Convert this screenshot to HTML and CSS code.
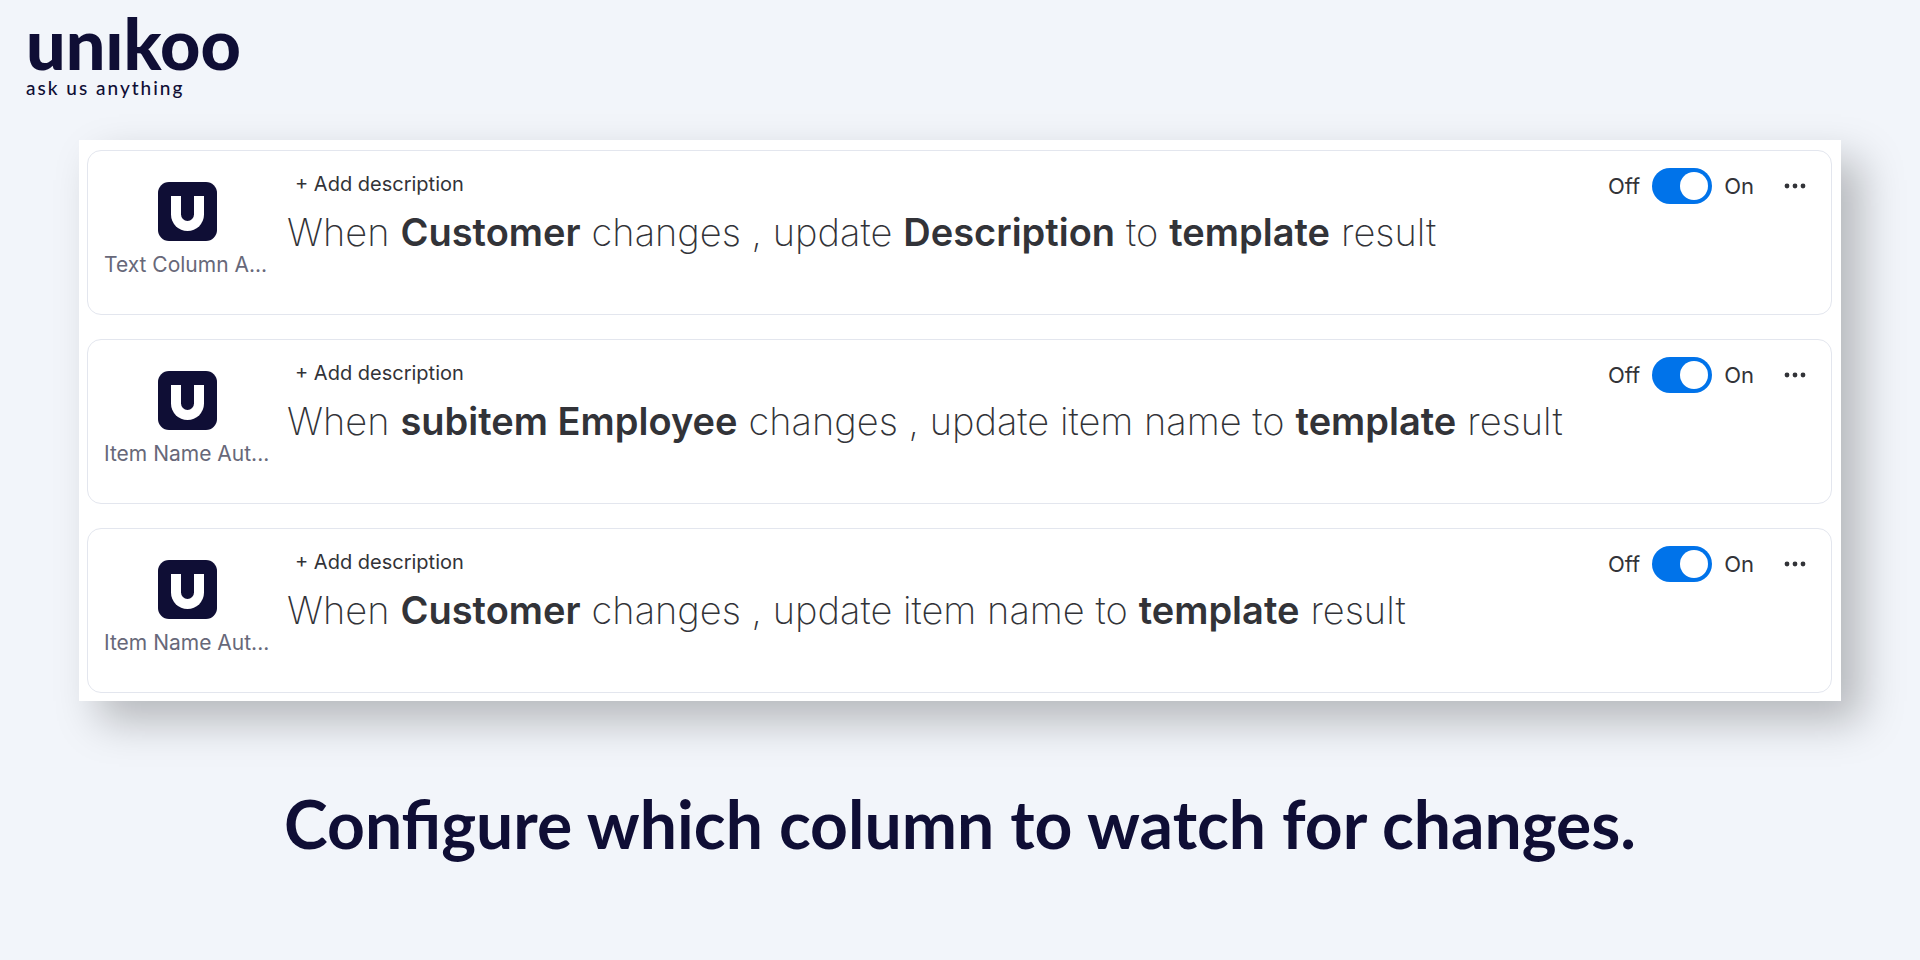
FILE: index.html
```
<!DOCTYPE html>
<html lang="en">
<head>
  <meta charset="UTF-8" />
  <meta name="viewport" content="width=device-width, initial-scale=1.0"/>
  <title>unikoo</title>
  <link rel="stylesheet" href="styles.css">
</head>
<body>
  <header class="brand">
    <div class="brand-name">unıkoo</div>
    <div class="brand-tagline">ask us anything</div>
  </header>

  <main>
    <section class="panel">
      <article class="card">
        <div class="app">
          <div class="app-icon"><span class="app-mark"></span></div>
          <div class="app-name">Text Column A...</div>
        </div>
        <div class="recipe">
          <button class="add-description" type="button">+ Add description</button>
          <p class="sentence">
            <span>When</span> <strong>Customer</strong> <span>changes , update</span> <strong>Description</strong> <span>to</span> <strong>template</strong> <span>result</span>
          </p>
        </div>
        <div class="controls">
          <label class="switch">Off <input type="checkbox" class="toggle" checked> On</label>
          <button class="menu" type="button" aria-label="Menu">
            <svg width="22" height="6" viewBox="0 0 22 6"><circle cx="3" cy="3" r="2.4"/><circle cx="11" cy="3" r="2.4"/><circle cx="19" cy="3" r="2.4"/></svg>
          </button>
        </div>
      </article>

      <article class="card">
        <div class="app">
          <div class="app-icon"><span class="app-mark"></span></div>
          <div class="app-name">Item Name Aut...</div>
        </div>
        <div class="recipe">
          <button class="add-description" type="button">+ Add description</button>
          <p class="sentence">
            <span>When</span> <strong>subitem Employee</strong> <span>changes , update item name to</span> <strong>template</strong> <span>result</span>
          </p>
        </div>
        <div class="controls">
          <label class="switch">Off <input type="checkbox" class="toggle" checked> On</label>
          <button class="menu" type="button" aria-label="Menu">
            <svg width="22" height="6" viewBox="0 0 22 6"><circle cx="3" cy="3" r="2.4"/><circle cx="11" cy="3" r="2.4"/><circle cx="19" cy="3" r="2.4"/></svg>
          </button>
        </div>
      </article>

      <article class="card">
        <div class="app">
          <div class="app-icon"><span class="app-mark"></span></div>
          <div class="app-name">Item Name Aut...</div>
        </div>
        <div class="recipe">
          <button class="add-description" type="button">+ Add description</button>
          <p class="sentence">
            <span>When</span> <strong>Customer</strong> <span>changes , update item name to</span> <strong>template</strong> <span>result</span>
          </p>
        </div>
        <div class="controls">
          <label class="switch">Off <input type="checkbox" class="toggle" checked> On</label>
          <button class="menu" type="button" aria-label="Menu">
            <svg width="22" height="6" viewBox="0 0 22 6"><circle cx="3" cy="3" r="2.4"/><circle cx="11" cy="3" r="2.4"/><circle cx="19" cy="3" r="2.4"/></svg>
          </button>
        </div>
      </article>
    </section>

    <h1 class="headline">Configure which column to watch for changes.</h1>
  </main>
</body>
</html>
```
FILE: styles.css
```
* {
  box-sizing: border-box;
}
body {
  margin: 0;
  background-color: #f2f5fa;
  color: #323338;
  font-family: Inter, sans-serif;
}
.brand {
  height: 140px;
  padding: 10px 26px;
  color: #0f0e35;
  font-family: Lato, sans-serif;
}
.brand-name {
  font-size: 70px;
  line-height: 66px;
  font-weight: 900;
}
.brand-tagline {
  font-size: 19px;
  line-height: 24px;
  font-weight: 500;
  letter-spacing: 2px;
}
.panel {
  display: flex;
  flex-direction: column;
  gap: 24px;
  margin: 0 79px;
  padding: 10px 9px 8px 8px;
  background-color: #fff;
  box-shadow: 20px 20px 40px rgba(0, 0, 0, 0.25);
}
.card {
  display: flex;
  height: 165px;
  border: 1px solid #e3e6ee;
  border-radius: 14px;
}
.app {
  display: flex;
  flex-direction: column;
  align-items: center;
  width: 199px;
  padding: 31px 16px 0;
}
.app-icon {
  display: flex;
  justify-content: center;
  width: 59px;
  height: 59px;
  padding-top: 14px;
  border-radius: 11px;
  background-color: #0f0e35;
}
.app-mark {
  width: 33px;
  height: 35px;
  border: 10px solid #fff;
  border-top: none;
  border-radius: 0 0 17px 17px;
}
.app-name {
  width: 100%;
  margin-top: 10px;
  color: #676879;
  font-size: 21px;
  line-height: 28px;
  white-space: nowrap;
}
.recipe {
  flex: 1;
  padding-top: 19px;
}
button {
  border: none;
  background: none;
  color: inherit;
  font-family: inherit;
  cursor: pointer;
}
.add-description {
  display: block;
  padding: 0 8px;
  font-size: 20px;
  line-height: 28px;
}
.sentence {
  display: flex;
  align-items: baseline;
  gap: 11px;
  margin: 10px 0 0;
  font-size: 38px;
  line-height: 48px;
  font-weight: 200;
  white-space: nowrap;
}
.sentence strong {
  font-weight: 600;
}
.controls {
  display: flex;
  align-items: center;
  gap: 22px;
  height: 36px;
  margin-top: 17px;
  padding-right: 17px;
}
.switch {
  display: flex;
  align-items: center;
  gap: 12px;
  font-size: 22px;
}
.toggle {
  display: flex;
  align-items: center;
  justify-content: flex-end;
  width: 60px;
  height: 36px;
  margin: 0;
  padding: 4px;
  border-radius: 18px;
  background-color: #0073ea;
  appearance: none;
  cursor: pointer;
}
.toggle::before {
  content: "";
  width: 28px;
  height: 28px;
  border-radius: 50%;
  background-color: #fff;
}
.toggle:not(:checked) {
  justify-content: flex-start;
  background-color: #c3c6d4;
}
.menu {
  display: flex;
  padding: 8px;
}
.menu svg {
  fill: #323338;
}
.headline {
  margin: 78px 0 0;
  color: #0f0e35;
  font-family: Lato, sans-serif;
  font-size: 66px;
  line-height: 90px;
  font-weight: 700;
  text-align: center;
}
```
